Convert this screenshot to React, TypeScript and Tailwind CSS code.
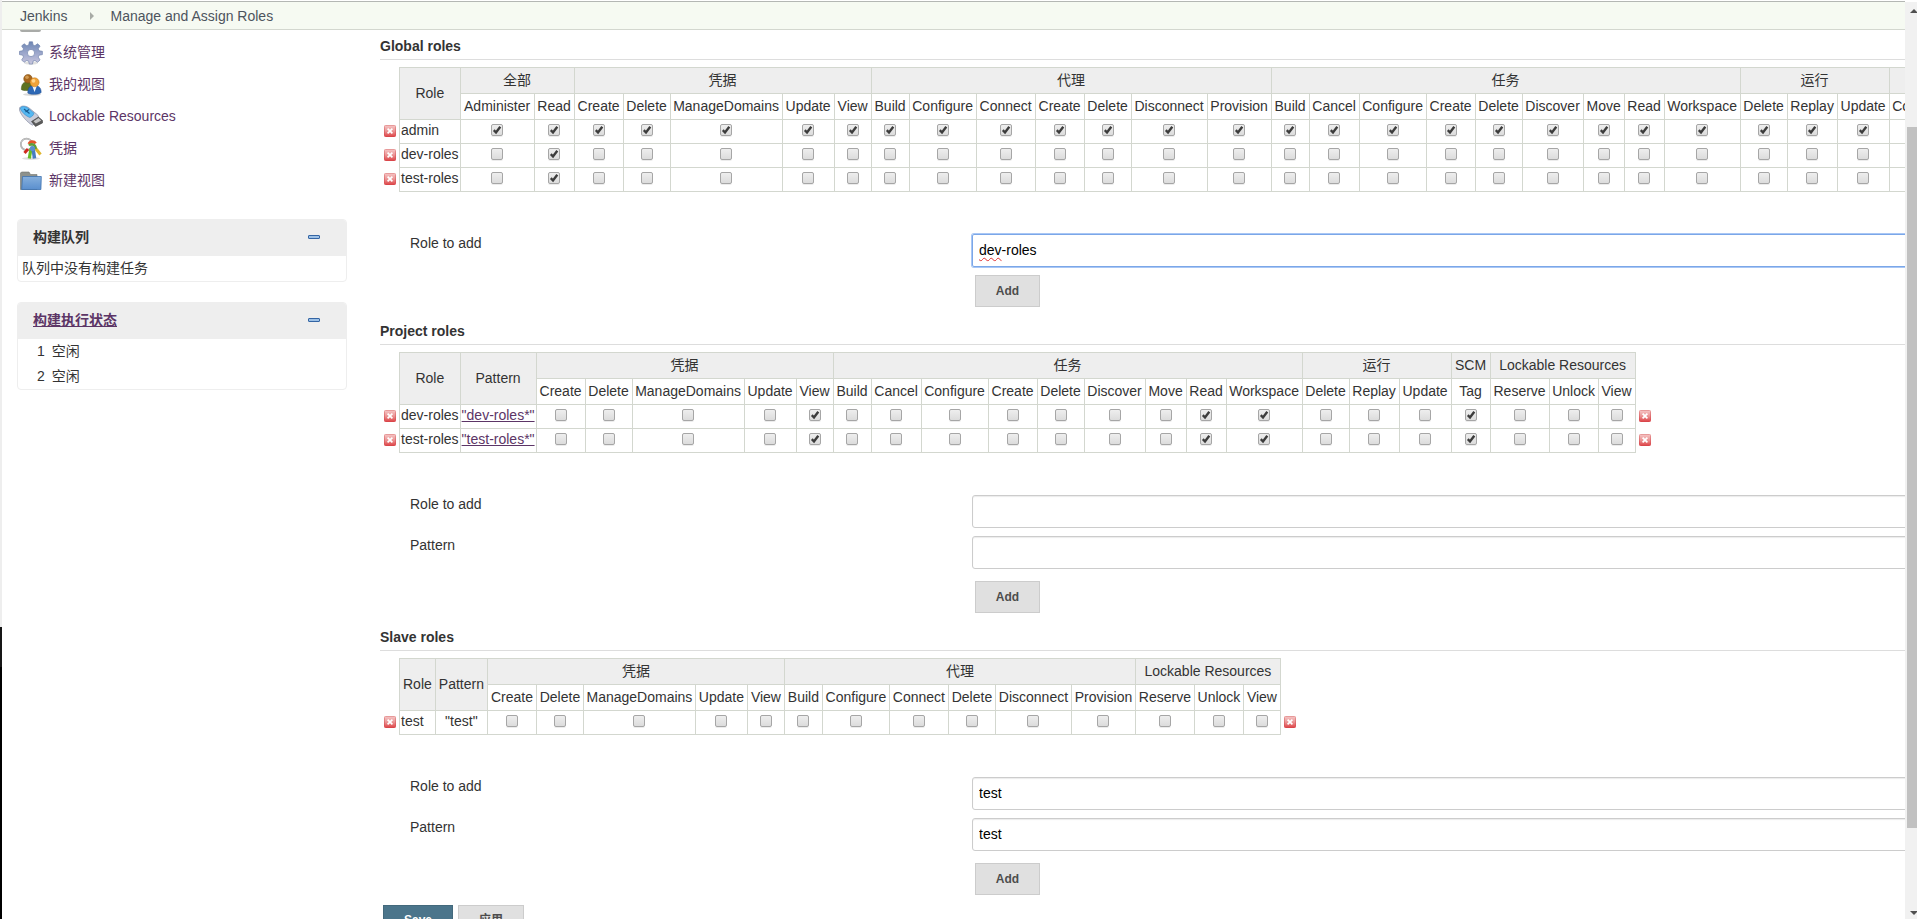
import type { ReactNode } from "react";

type Group = { name: string; perms: string[] };
type RoleRow = { name: string; pattern?: string; link?: boolean; checked: string[] | "all" };

const CREDENTIALS: Group = { name: "凭据", perms: ["Create", "Delete", "ManageDomains", "Update", "View"] };
const RUN: Group = { name: "运行", perms: ["Delete", "Replay", "Update"] };
const SCM: Group = { name: "SCM", perms: ["Tag"] };
const LOCKABLE: Group = { name: "Lockable Resources", perms: ["Reserve", "Unlock", "View"] };
const JOB: Group = {
  name: "任务",
  perms: ["Build", "Cancel", "Configure", "Create", "Delete", "Discover", "Move", "Read", "Workspace"],
};

const GLOBAL_GROUPS: Group[] = [
  { name: "全部", perms: ["Administer", "Read"] },
  CREDENTIALS,
  { name: "代理", perms: ["Build", "Configure", "Connect", "Create", "Delete", "Disconnect", "Provision"] },
  JOB,
  RUN,
  { name: "视图", perms: ["Configure"] },
];
const PROJECT_GROUPS: Group[] = [CREDENTIALS, JOB, RUN, SCM, LOCKABLE];
const SLAVE_GROUPS: Group[] = [
  CREDENTIALS,
  { name: "代理", perms: ["Build", "Configure", "Connect", "Delete", "Disconnect", "Provision"] },
  LOCKABLE,
];

const PROJECT_CHECKED = ["凭据/View", "任务/Read", "任务/Workspace", "SCM/Tag"];

const COLUMN_WIDTH: Record<string, string> = {
  Administer: "w-[74px]",
  Build: "w-[38px]",
  Cancel: "w-[50px]",
  Configure: "w-[67px]",
  Connect: "w-[59px]",
  Create: "w-[49px]",
  Delete: "w-[47px]",
  Disconnect: "w-[76px]",
  Discover: "w-[61px]",
  ManageDomains: "w-[112px]",
  Move: "w-[41px]",
  Provision: "w-[64px]",
  Read: "w-[40px]",
  Replay: "w-[50px]",
  Reserve: "w-[59px]",
  Tag: "w-[39px]",
  Unlock: "w-[49px]",
  Update: "w-[52px]",
  View: "w-[37px]",
  Workspace: "w-[76px]",
};

function RemoveButton({ label }: { label: string }) {
  return (
    <button type="button" aria-label={label} className="block size-3">
      <svg viewBox="0 0 12 12" className="size-3">
        <defs>
          <linearGradient id="remove" x1="0" y1="0" x2="0" y2="1">
            <stop offset="0" stopColor="#f5c4c4" />
            <stop offset="0.5" stopColor="#eb9696" />
            <stop offset="1" stopColor="#de4548" />
          </linearGradient>
          <linearGradient id="remove-edge" x1="0" y1="0" x2="0" y2="1">
            <stop offset="0" stopColor="#e79a9a" />
            <stop offset="1" stopColor="#d9464a" />
          </linearGradient>
        </defs>
        <rect x="0.5" y="0.5" width="11" height="11" rx="0.8" fill="url(#remove)" stroke="url(#remove-edge)" />
        <path d="M3.600 3.600l4.800 4.800M8.400 3.600l-4.800 4.800" stroke="#fff" strokeWidth="1.700" />
      </svg>
    </button>
  );
}

function Tick({ label, on }: { label: string; on: boolean }) {
  return (
    <span className="mx-auto grid size-3">
      <input
        type="checkbox"
        aria-label={label}
        defaultChecked={on}
        className="peer col-start-1 row-start-1 size-3 appearance-none rounded-[2px] border border-[#a6a6a6] bg-linear-to-b from-[#eeeeee] to-[#dcdcdc] shadow-[0_1px_0_#ececec]"
      />
      <svg
        viewBox="0 0 12 12"
        className="pointer-events-none invisible col-start-1 row-start-1 size-3 peer-checked:visible"
      >
        <path d="M2.800 6.200l2.200 2.300L9.300 2.800" fill="none" stroke="#3c3c3c" strokeWidth="2.400" />
      </svg>
    </span>
  );
}

function RoleTable({ groups, rows, withPattern }: { groups: Group[]; rows: RoleRow[]; withPattern?: boolean }) {
  const head = "h-[26px] border border-[#d3d7cf] pt-0 pb-[2px] font-normal";
  const cell = "h-6 border border-[#d3d7cf] pt-0 pb-[3px]";
  return (
    <table className="border-collapse whitespace-nowrap text-center">
      <thead>
        <tr>
          <td rowSpan={2} className="p-0" />
          <th rowSpan={2} className={`${head} bg-[#eeeeee] px-[3px]`}>Role</th>
          {withPattern && <th rowSpan={2} className={`${head} bg-[#eeeeee] px-[3px]`}>Pattern</th>}
          {groups.map((g) => (
            <th key={g.name} colSpan={g.perms.length} className={`${head} bg-[#eeeeee] px-[3px]`}>
              {g.name}
            </th>
          ))}
        </tr>
        <tr>
          {groups.flatMap((g) =>
            g.perms.map((p) => (
              <th key={g.name + p} className={`${head} ${COLUMN_WIDTH[p]} px-0`}>
                {p}
              </th>
            )),
          )}
        </tr>
      </thead>
      <tbody>
        {rows.map((r) => (
          <tr key={r.name}>
            <td className="h-6 pb-[2px] pl-1 pr-[3px] pt-0">
              <RemoveButton label={`Remove ${r.name}`} />
            </td>
            <td className={`${cell} px-px text-left`}>{r.name}</td>
            {withPattern && (
              <td className={`${cell} px-px`}>
                {r.link ? (
                  <a href="#pattern" className="text-[#5c3566] underline">{r.pattern}</a>
                ) : (
                  r.pattern
                )}
              </td>
            )}
            {groups.flatMap((g) =>
              g.perms.map((p) => (
                <td key={g.name + p} className={`${cell} px-0`}>
                  <Tick
                    label={`${r.name} ${g.name} ${p}`}
                    on={r.checked === "all" || r.checked.includes(`${g.name}/${p}`)}
                  />
                </td>
              )),
            )}
            {withPattern && (
              <td className="h-6 pb-[2px] pl-[3px] pt-0">
                <RemoveButton label={`Remove ${r.name} row`} />
              </td>
            )}
          </tr>
        ))}
      </tbody>
    </table>
  );
}

function Field({ id, label, value, focused }: { id: string; label: string; value?: string; focused?: boolean }) {
  return (
    <div className="mb-2 flex items-start pl-[30px]">
      <label htmlFor={id} className="w-[562px] shrink-0 leading-[19px]">{label}</label>
      {focused ? (
        <div className="flex h-[33px] grow items-center rounded-[2px] border border-[#7ba7e8] px-[6px] pb-[2px] text-black shadow-[0_0_0_1px_#a9c7f5]">
          <input id={id} defaultValue={value} className="peer sr-only" />
          <span aria-hidden="true">
            <span className="underline decoration-[#e03030] decoration-wavy decoration-1 underline-offset-2 [text-decoration-skip-ink:none]">
              dev
            </span>
            -roles
          </span>
        </div>
      ) : (
        <input
          id={id}
          defaultValue={value}
          className="h-[33px] grow rounded-[3px] border border-[#cccccc] bg-white px-[6px] pb-[2px] text-black shadow-[inset_0_1px_1px_#ececec] outline-none"
        />
      )}
    </div>
  );
}

function AddButton({ first }: { first?: boolean }) {
  return (
    <button
      type="button"
      className={`${first ? "" : "mt-3"} ml-[595px] block h-8 w-[65px] border border-[#cccccc] bg-[#e0e0e0] text-[12px] font-bold text-[#4d4d4d]`}
    >
      Add
    </button>
  );
}

function Section({ title, children }: { title: string; children: ReactNode }) {
  return (
    <section>
      <h2 className="mb-[7px] h-6 border-b border-[#dddddd] pt-[2px] font-bold leading-4">{title}</h2>
      {children}
    </section>
  );
}

function GearIcon() {
  return (
    <svg viewBox="0 0 24 24" className="size-6 shrink-0">
      <defs>
        <linearGradient id="gear" x1="0" y1="0" x2="0" y2="1">
          <stop offset="0" stopColor="#6e87b4" />
          <stop offset="0.6" stopColor="#a5add0" />
          <stop offset="1" stopColor="#c9c6dd" />
        </linearGradient>
      </defs>
      <ellipse cx="12" cy="22" rx="7" ry="1.6" fill="#000" opacity="0.12" />
      <g fill="url(#gear)" stroke="#6478a4" strokeWidth="0.6">
        <path
          fillRule="evenodd"
          d="M10.3.8h3.2l.5 3.1 1.9.8 2.7-2 2.5 2.4-1.9 2.7.8 1.9 3.4.6v3.3l-3.4.6-.8 1.9 1.9 2.8-2.5 2.4-2.7-1.9-1.9.8-.5 2.9h-3.2l-.6-2.9-1.9-.8L5 21.3l-2.4-2.4 1.9-2.8-.8-1.9-3.2-.6v-3.3l3.2-.6.8-1.9-1.9-2.7L5 2.7l2.8 2 1.9-.8zM12 8.4a3.6 3.6 0 100 7.2 3.6 3.6 0 000-7.2z"
        />
      </g>
    </svg>
  );
}

function UsersIcon() {
  return (
    <svg viewBox="0 0 24 24" className="size-6 shrink-0">
      <ellipse cx="13" cy="21.5" rx="9" ry="1.5" fill="#000" opacity="0.15" />
      <path d="M2.3 16.5c0-4.5 1.5-7 4.5-7.5h4c2.5.6 3.5 3 3.5 6.5-1 2-10 3-12 1z" fill="#5d7220" stroke="#3f5212" strokeWidth="0.5" />
      <circle cx="9" cy="5.8" r="4.3" fill="#a8671d" stroke="#7c4a10" strokeWidth="0.5" />
      <circle cx="8" cy="4.3" r="1.8" fill="#d19a52" />
      <path d="M8.8 20c0-4.500 1.500-6.800 4.500-7.300h4.200c3.200.5 4.700 3 4.700 6.800-2 2.300-11.500 2.500-13.400.5z" fill="#2d68b5" stroke="#1d4a8c" strokeWidth="0.5" />
      <path d="M13.300 13h4.500l-2.200 6z" fill="#f4f7fb" />
      <circle cx="15.600" cy="9.300" r="4.500" fill="#f0a33a" stroke="#bd7418" strokeWidth="0.500" />
      <circle cx="14.500" cy="7.800" r="1.900" fill="#ffd58c" />
    </svg>
  );
}

function UsbIcon() {
  return (
    <svg viewBox="0 0 24 24" className="size-6 shrink-0">
      <path d="M.6 2.800C2.200.400 6 .600 9.500 2.500l9.300 7.600c.8 1 .7 4.500.2 5.900l-5.500 4.200C9 18 1.800 10.500.5 5z" fill="#c9ccd9" stroke="#8b90a6" strokeWidth="0.700" />
      <path d="M1.300 3C3 1 6 1.300 9 3l6 5.200c-.8 2.300-2 3.500-4.200 4.300C7 11 2 7 1.300 3z" fill="#55b8f2" stroke="#2380c4" strokeWidth="0.500" />
      <path d="M5 4l5.500 4.500M6.500 7l3.500-2.500" stroke="#17598f" strokeWidth="1.100" />
      <path d="M12.500 16.500l7-4.500 4 3.500V18l-7 3.500z" fill="#5a5a5a" stroke="#333" strokeWidth="0.500" />
      <path d="M14.500 16.300l5-3.200 2.800 2.400-5.500 3z" fill="#c4c4c4" />
    </svg>
  );
}

function KeysIcon() {
  return (
    <svg viewBox="0 0 24 24" className="size-6 shrink-0">
      <ellipse cx="12" cy="21.500" rx="9" ry="1.500" fill="#000" opacity="0.120" />
      <circle cx="7.500" cy="7.300" r="5.700" fill="none" stroke="#9b9b9b" strokeWidth="1.700" />
      <circle cx="7.500" cy="7.300" r="5.700" fill="none" stroke="#e6e6e6" strokeWidth="0.600" />
      <path d="M9 12l-3.500 4" stroke="#d02a20" strokeWidth="3" />
      <path d="M10 7c1-2.800 5-3 6.500-.5" fill="none" stroke="#e5542a" strokeWidth="3" />
      <path d="M15.500 10l6 7.500" stroke="#dfb52c" strokeWidth="3" />
      <path d="M12 11.500l-1.700 10" stroke="#65bd25" strokeWidth="3.200" />
      <path d="M10 8.500c2.500-2.800 7-.5 6.500 3.500" fill="none" stroke="#5d9f3a" strokeWidth="2.500" />
      <path d="M14 11l1.500 10.500" stroke="#477cc0" strokeWidth="3.500" />
      <circle cx="13.500" cy="11.500" r="2.600" fill="#5b8fce" />
    </svg>
  );
}

function FolderIcon() {
  return (
    <svg viewBox="0 0 24 24" className="size-6 shrink-0">
      <defs>
        <linearGradient id="folder" x1="0" y1="0" x2="0" y2="1">
          <stop offset="0" stopColor="#86b0dd" />
          <stop offset="1" stopColor="#5a8fce" />
        </linearGradient>
      </defs>
      <path d="M1.500 20.500V4l1-1h7.500l1.500 2.500h6.500v15z" fill="#8d918c" stroke="#6e726d" strokeWidth="0.600" />
      <path d="M3.500 7.500h18.800L21.900 20.500H2.700z" fill="url(#folder)" stroke="#3f72b0" strokeWidth="0.800" />
    </svg>
  );
}

const TASKS = [
  { label: "系统管理", icon: <GearIcon /> },
  { label: "我的视图", icon: <UsersIcon /> },
  { label: "Lockable Resources", icon: <UsbIcon /> },
  { label: "凭据", icon: <KeysIcon /> },
  { label: "新建视图", icon: <FolderIcon /> },
];

function Pane({ title, children }: { title: ReactNode; children: ReactNode }) {
  return (
    <section className="mb-5 overflow-hidden rounded-[4px] border border-[#eeeeee]">
      <header className="flex h-9 items-center justify-between bg-[#eeeeee] pb-[2px] pl-[15px] pr-[26px] font-bold">
        {title}
        <button type="button" aria-label="Collapse" className="h-1 w-3 rounded-[1px] border border-[#3465a4] bg-[#9cc0e6]" />
      </header>
      {children}
    </section>
  );
}

function Sidebar() {
  return (
    <aside className="w-[330px] shrink-0">
      <div className="ml-[3px] h-[2px] w-[21px] rounded-b-[2px] bg-[#a9aba8]" />
      <nav className="mb-[22px] mt-[5px] flex flex-col">
        {TASKS.map((t) => (
          <a key={t.label} href="#task" className="flex h-8 items-center gap-[6px] pl-[2px] text-[#5c3566]">
            {t.icon}
            <span className="pb-[2px]">{t.label}</span>
          </a>
        ))}
      </nav>
      <Pane title={<h3>构建队列</h3>}>
        <p className="h-[25px] pl-1 leading-6">队列中没有构建任务</p>
      </Pane>
      <Pane title={<a href="#executors" className="text-[#5c3566] underline">构建执行状态</a>}>
        <ol className="pl-[19px]">
          {["1", "2"].map((n) => (
            <li key={n} className="flex h-[25px] items-center gap-[7px] pb-[2px]">
              <span>{n}</span>
              空闲
            </li>
          ))}
        </ol>
      </Pane>
    </aside>
  );
}

export default function App() {
  return (
    <div className="flex h-screen overflow-hidden bg-white font-['Liberation_Sans','Noto_Sans_CJK_SC',sans-serif] text-[14px] leading-4 text-[#333333]">
      <div className="flex w-[2px] shrink-0 flex-col bg-black">
        <div className="h-[627px] bg-[#eeeeee]" />
        <div className="h-10 bg-[#161616]" />
      </div>
      <div className="flex min-w-0 grow flex-col">
        <nav className="mt-px flex h-[29px] shrink-0 items-center border-b border-t border-b-[#d3d7cf] border-t-[#b4b7b4] bg-[#f6faf2] pl-[18px] text-[#4d545d]">
          <a href="#home">Jenkins</a>
          <svg viewBox="0 0 4 8" className="ml-[23px] mr-4 h-2 w-1">
            <path d="M0 0l4 4-4 4z" fill="#a8aba6" />
          </svg>
          <a href="#roles">Manage and Assign Roles</a>
        </nav>
        <div className="flex min-h-0 grow overflow-hidden pl-[15px]">
          <Sidebar />
          <main className="ml-[33px] min-w-max pt-[6px]">
            <Section title="Global roles">
              <RoleTable
                groups={GLOBAL_GROUPS}
                rows={[
                  { name: "admin", checked: "all" },
                  { name: "dev-roles", checked: ["全部/Read"] },
                  { name: "test-roles", checked: ["全部/Read"] },
                ]}
              />
              <div className="mb-[14px] mt-[42px]">
                <Field id="global-role" label="Role to add" value="dev-roles" focused />
                <AddButton first />
              </div>
            </Section>
            <Section title="Project roles">
              <RoleTable
                withPattern
                groups={PROJECT_GROUPS}
                rows={[
                  { name: "dev-roles", pattern: '"dev-roles*"', link: true, checked: PROJECT_CHECKED },
                  { name: "test-roles", pattern: '"test-roles*"', link: true, checked: PROJECT_CHECKED },
                ]}
              />
              <div className="mb-[14px] mt-[42px]">
                <Field id="project-role" label="Role to add" />
                <Field id="project-pattern" label="Pattern" />
                <AddButton />
              </div>
            </Section>
            <Section title="Slave roles">
              <RoleTable
                withPattern
                groups={SLAVE_GROUPS}
                rows={[{ name: "test", pattern: '"test"', checked: [] }]}
              />
              <div className="mb-[10px] mt-[42px]">
                <Field id="slave-role" label="Role to add" value="test" />
                <Field id="slave-pattern" label="Pattern" value="test" />
                <AddButton />
              </div>
            </Section>
            <div className="flex gap-[5px] pl-[3px] text-[12px] font-bold">
              <button type="button" className="h-8 w-[70px] border border-[#43697c] bg-[#4b758b] pb-[2px] text-white">Save</button>
              <button type="button" className="h-8 w-[66px] border border-[#cccccc] bg-[#e0e0e0] pb-[2px] text-[#4d4d4d]">应用</button>
            </div>
          </main>
        </div>
      </div>
      <div className="mt-[2px] flex w-3 shrink-0 flex-col bg-[#f1f1f1] pl-[2px]">
        <svg viewBox="0 0 10 125" className="h-[125px] w-[10px] shrink-0">
          <path d="M3 11l4-4 4 4z" fill="#505050" />
        </svg>
        <div className="h-[701px] bg-[#c1c1c1]" />
        <svg viewBox="0 0 10 10" className="mt-auto h-[10px] w-[10px] shrink-0">
          <path d="M3 2h8L7 6z" fill="#505050" />
        </svg>
      </div>
    </div>
  );
}
